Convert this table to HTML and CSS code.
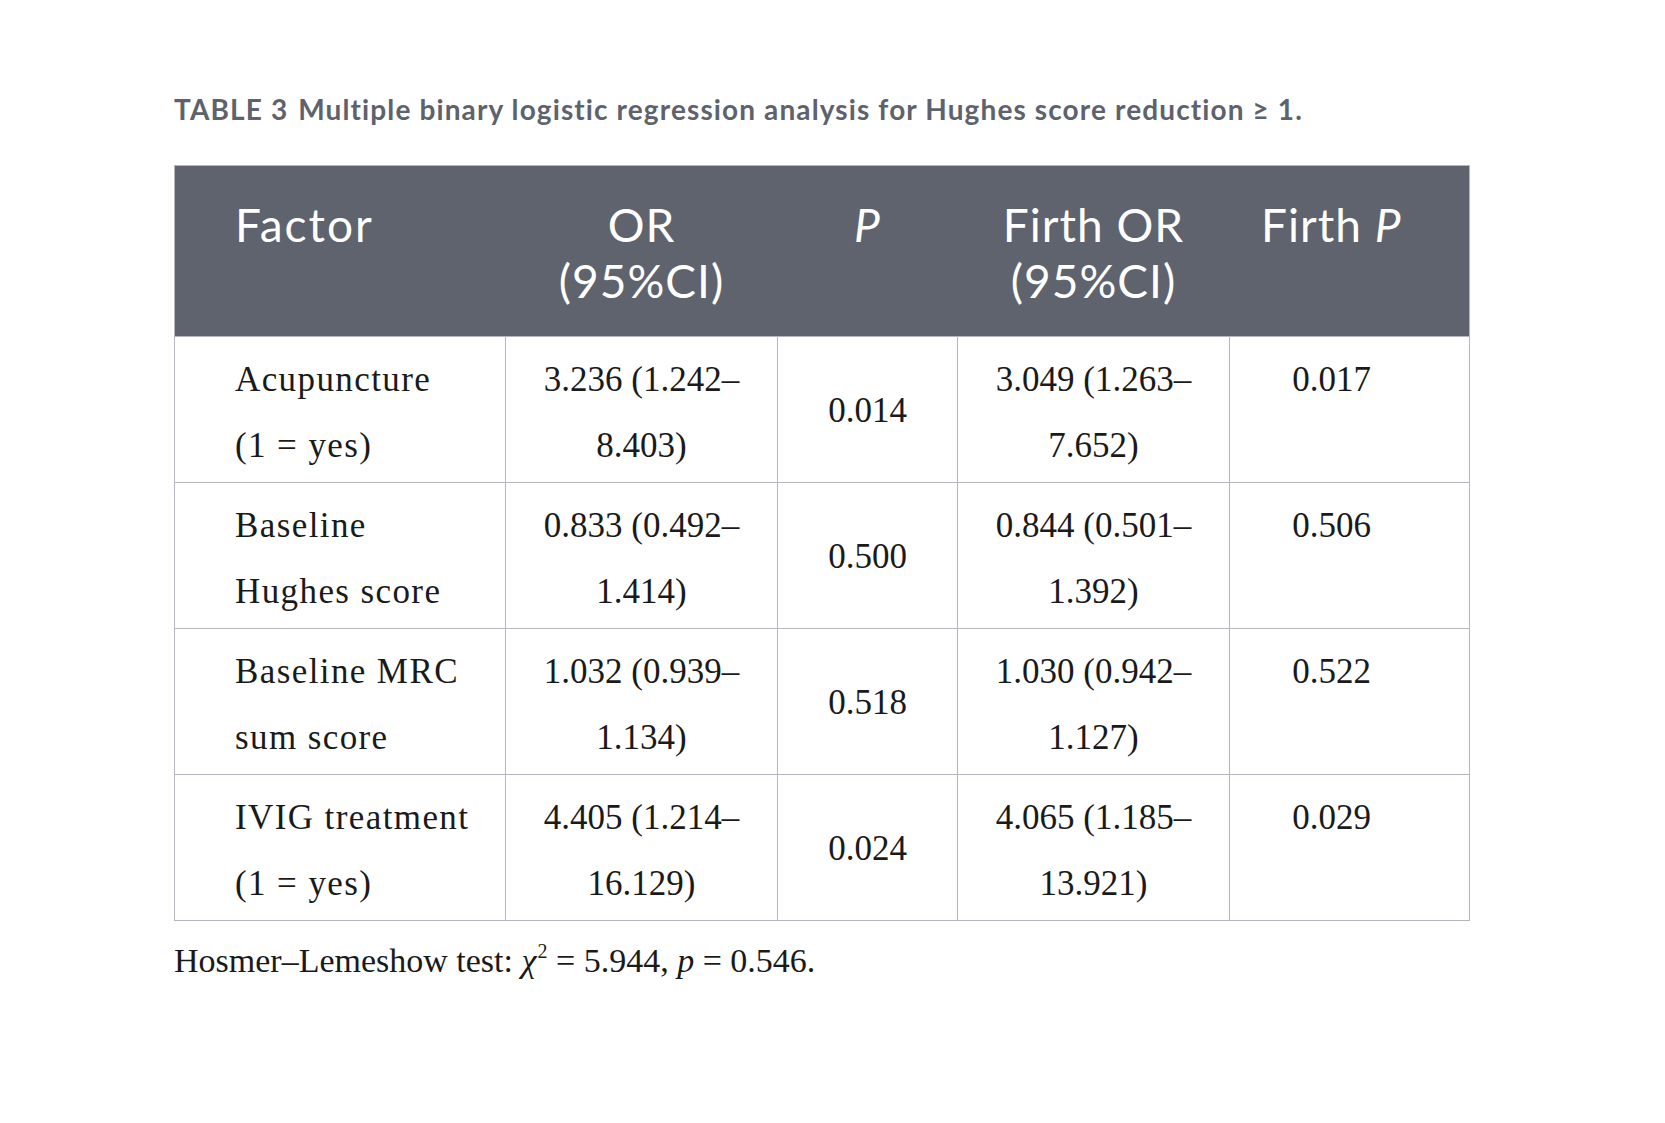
FILE: index.html
```html
<!DOCTYPE html>
<html lang="en">
<head>
<meta charset="utf-8">
<title>Table 3</title>
<link rel="stylesheet" href="styles.css">
</head>
<body>
<div class="page">
  <p class="caption"><span class="caption-label">TABLE 3</span>Multiple binary logistic regression analysis for Hughes score reduction <span class="ge">≥</span> 1.</p>
  <table class="data">
    <colgroup>
      <col class="c-factor">
      <col class="c-or">
      <col class="c-p">
      <col class="c-for">
      <col class="c-fp">
    </colgroup>
    <thead>
      <tr>
        <th class="left">Factor</th>
        <th>OR<br>(95%CI)</th>
        <th><i>P</i></th>
        <th>Firth OR<br>(95%CI)</th>
        <th class="last">Firth <i>P</i></th>
      </tr>
    </thead>
    <tbody>
      <tr>
        <td class="left">Acupuncture<br>(1 = yes)</td>
        <td>3.236 (1.242–<br>8.403)</td>
        <td class="mid">0.014</td>
        <td>3.049 (1.263–<br>7.652)</td>
        <td class="last">0.017</td>
      </tr>
      <tr>
        <td class="left">Baseline<br>Hughes score</td>
        <td>0.833 (0.492–<br>1.414)</td>
        <td class="mid">0.500</td>
        <td>0.844 (0.501–<br>1.392)</td>
        <td class="last">0.506</td>
      </tr>
      <tr>
        <td class="left">Baseline MRC<br>sum score</td>
        <td>1.032 (0.939–<br>1.134)</td>
        <td class="mid">0.518</td>
        <td>1.030 (0.942–<br>1.127)</td>
        <td class="last">0.522</td>
      </tr>
      <tr>
        <td class="left">IVIG treatment<br>(1 = yes)</td>
        <td>4.405 (1.214–<br>16.129)</td>
        <td class="mid">0.024</td>
        <td>4.065 (1.185–<br>13.921)</td>
        <td class="last">0.029</td>
      </tr>
    </tbody>
  </table>
  <p class="note">Hosmer–Lemeshow test: <i class="chi">χ</i><sup>2</sup> = 5.944, <i>p</i> = 0.546.</p>
</div>
</body>
</html>
```
FILE: styles.css
```css
html, body {
  margin: 0;
  padding: 0;
  background: #ffffff;
}

.page {
  padding: 93px 0 0 174px;
}

.caption {
  margin: 0;
  font-family: Lato, "Open Sans", sans-serif;
  font-weight: 700;
  font-size: 28px;
  letter-spacing: 1.12px;
  line-height: 32px;
  color: #5e626d;
  white-space: nowrap;
}

.caption-label {
  margin-right: 10px;
}

.data {
  margin-top: 40px;
  border-collapse: collapse;
  table-layout: fixed;
  width: 1295px;
  border: 1px solid #b4b7be;
}

.c-factor { width: 331px; }
.c-or { width: 272px; }
.c-p { width: 180px; }
.c-for { width: 272px; }
.c-fp { width: 240px; }

.data th {
  background: #5f636e;
  color: #ffffff;
  font-family: Lato, "Open Sans", sans-serif;
  font-weight: 400;
  font-size: 46px;
  letter-spacing: 1px;
  line-height: 56px;
  text-align: center;
  vertical-align: top;
  padding: 31px 10px 27px 10px;
  border: none;
}

.data th.left {
  letter-spacing: 2px;
}

.data td {
  font-family: "Liberation Serif", "Times New Roman", serif;
  font-size: 35px;
  line-height: 66px;
  color: #1a1a1a;
  text-align: center;
  vertical-align: top;
  padding: 10px 10px 3px 10px;
  border: 1px solid #b4b7be;
  white-space: nowrap;
}

.data th.left,
.data td.left {
  text-align: left;
  padding-left: 60px;
}

.data td.left {
  letter-spacing: 1.4px;
}

.data th.last,
.data td.last {
  padding-right: 46px;
}

.data td.mid {
  vertical-align: middle;
  padding-top: 6px;
  padding-bottom: 3px;
}

.note {
  margin: 20px 0 0 0;
  font-family: "Liberation Serif", "Times New Roman", serif;
  font-size: 34px;
  line-height: 40px;
  color: #1a1a1a;
}

.note sup {
  font-size: 20px;
  line-height: 0;
  vertical-align: 14px;
}

.chi {
  margin-right: 1px;
}
```
